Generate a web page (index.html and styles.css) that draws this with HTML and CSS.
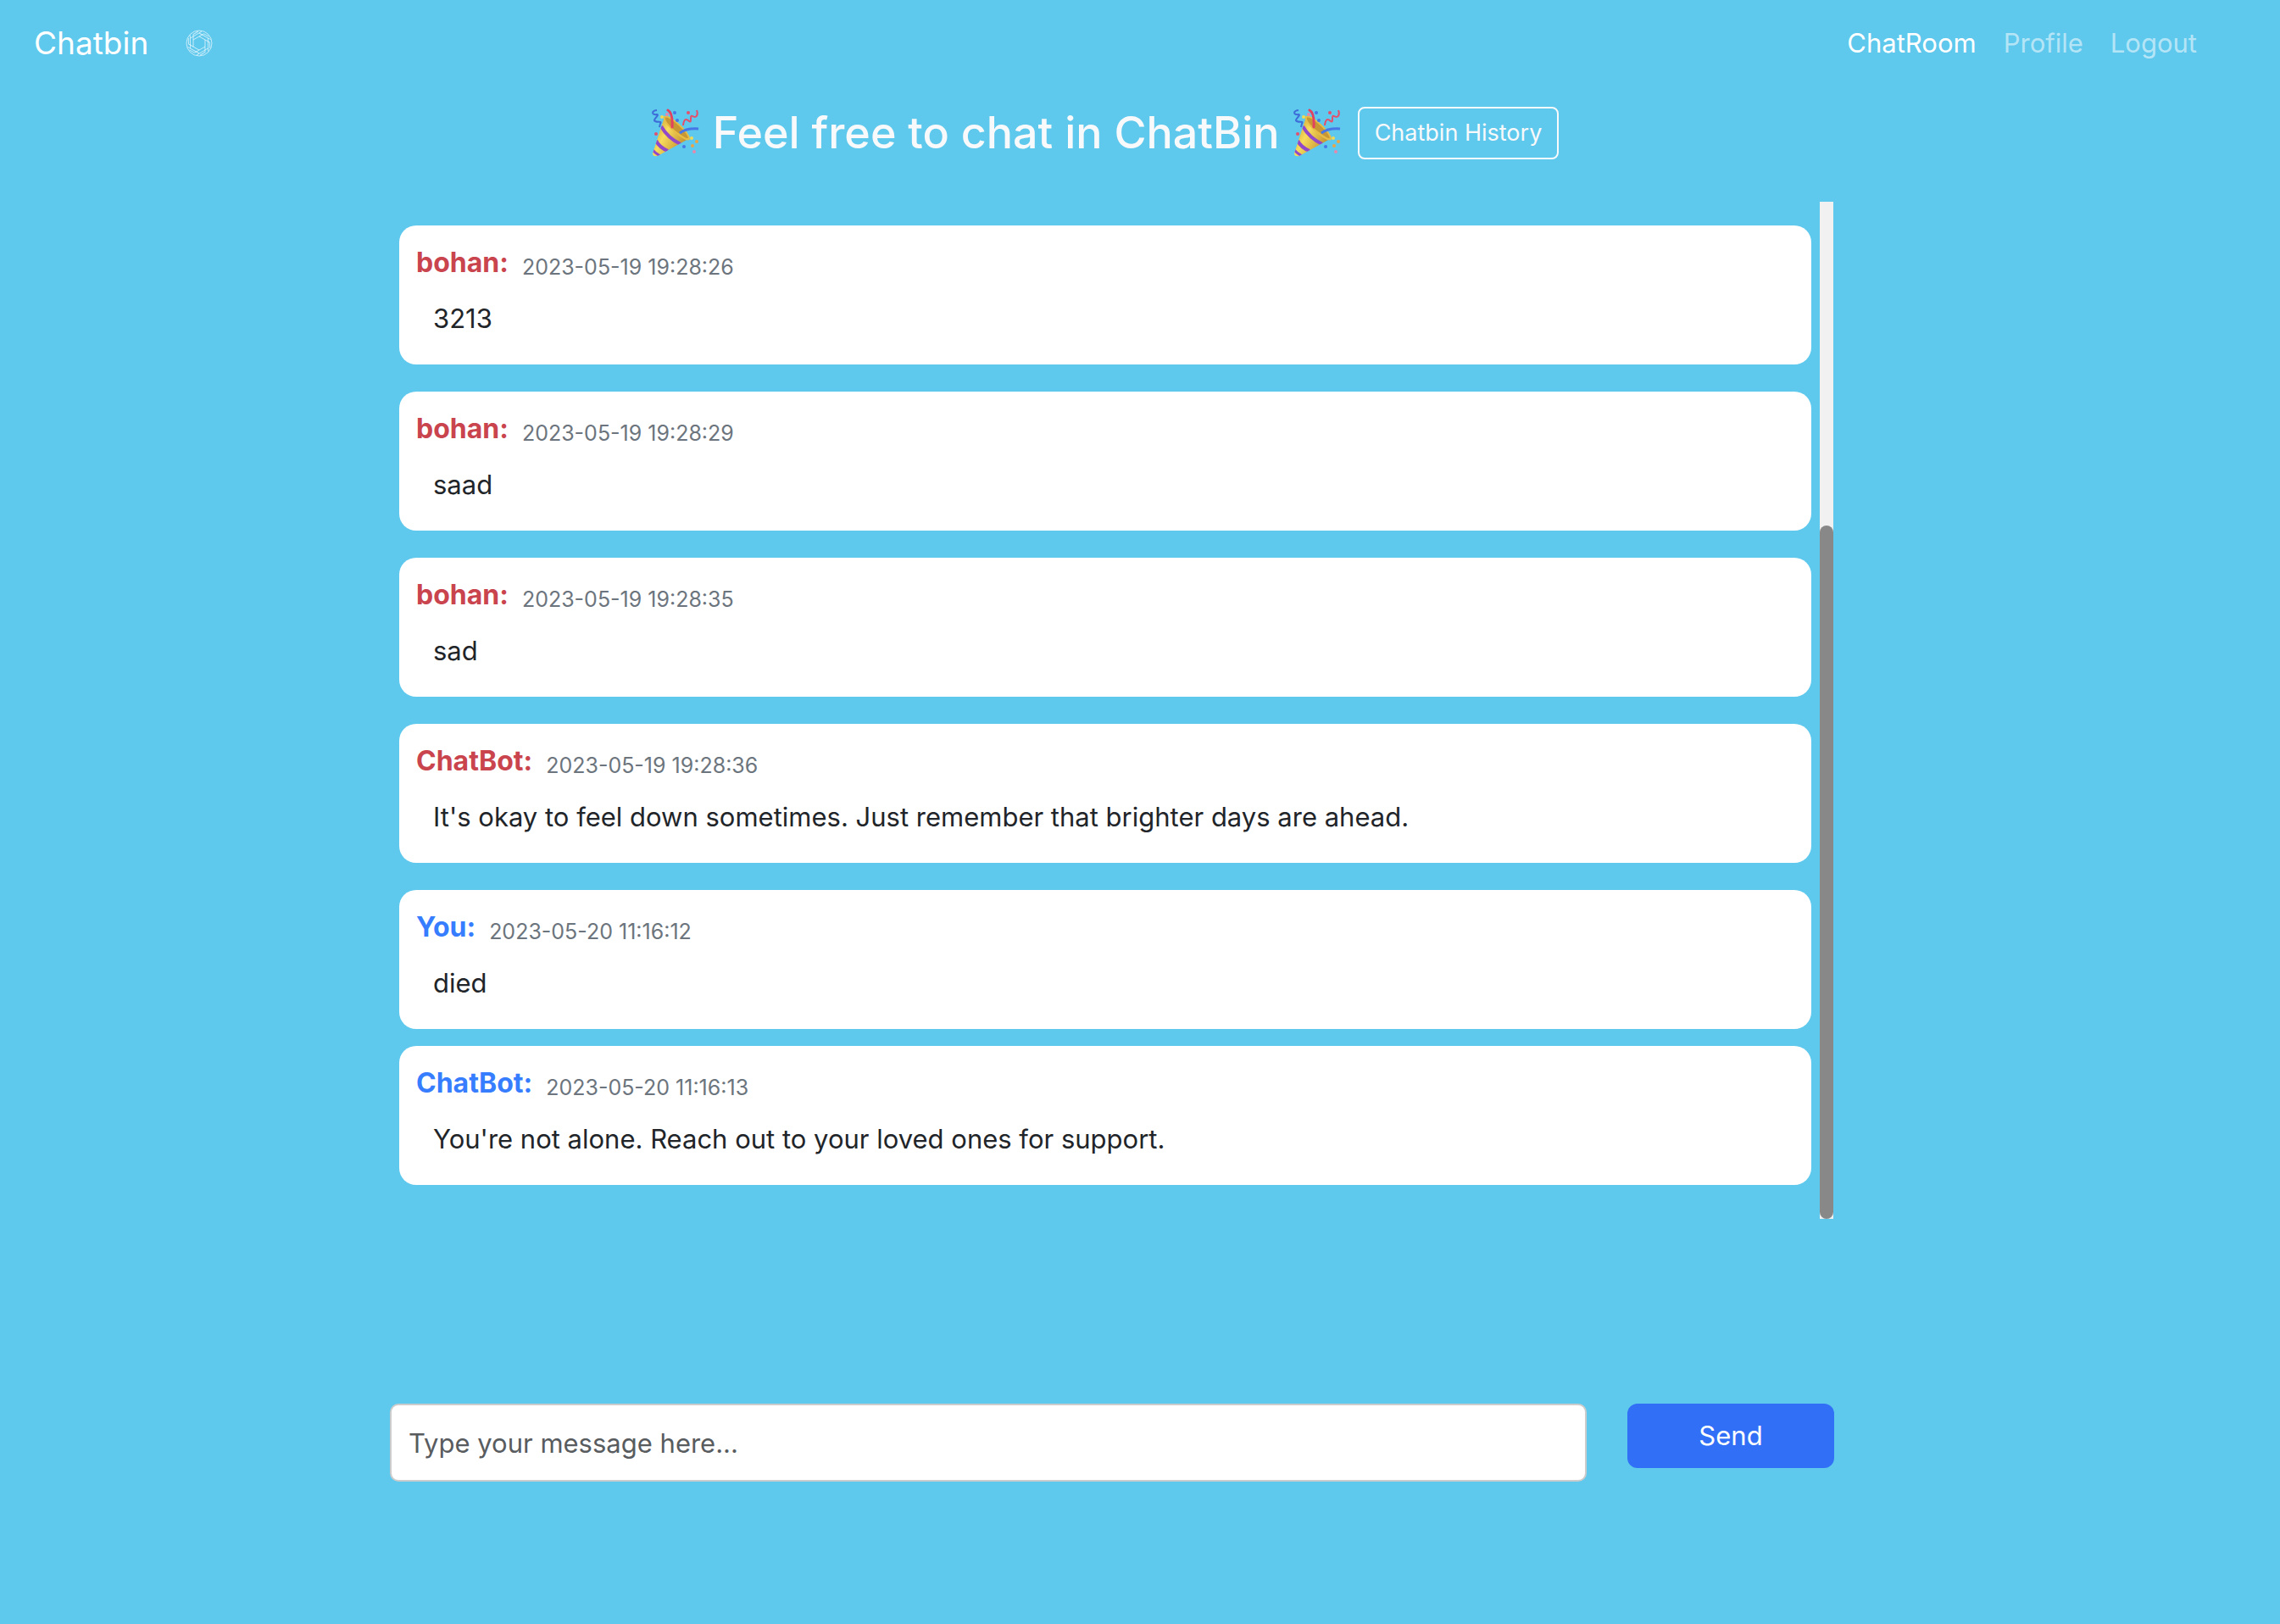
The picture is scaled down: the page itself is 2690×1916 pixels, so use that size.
FILE: index.html
```html
<!DOCTYPE html>
<html lang="en">
<head>
<meta charset="utf-8">
<meta name="viewport" content="width=device-width, initial-scale=1">
<title>Chatbin</title>
<link rel="stylesheet" href="styles.css">
</head>
<body>
<svg class="defs" aria-hidden="true">
  <defs>
    <g id="blade">
      <path d="M-7 -4 L5.5 -11.2 L11.5 -8 M-10.4 -6 L3 -14"/>
    </g>
    <linearGradient id="gold" x1="0" y1="0" x2="1" y2="0.6">
      <stop offset="0" stop-color="#b8892a"/>
      <stop offset="0.45" stop-color="#f7dc5c"/>
      <stop offset="1" stop-color="#c08a2c"/>
    </linearGradient>
    <clipPath id="cone-clip"><path d="M15 10 L1 53 Q1 57 7 56 L43 36 Z"/></clipPath>
    <symbol id="popper" viewBox="0 0 56 58">
      <path d="M15 10 L1 53 Q1 57 7 56 L43 36 Z" fill="url(#gold)"/>
      <g clip-path="url(#cone-clip)" fill="none" stroke="#9148c9" stroke-width="4">
        <path d="M11 21 Q19 35 34 42"/>
        <path d="M5 38 Q9 46 19 50"/>
        <path d="M1 49 Q4 53 10 56" stroke-width="3"/>
      </g>
      <path d="M15 10 C21 7 44 28 44 36 C40 39 13 18 15 10Z" fill="#c89735" stroke="#e8bd45" stroke-width="2"/>
      <path d="M19 2 Q25 5 24 22" fill="none" stroke="#e2415f" stroke-width="3" stroke-linecap="round"/>
      <path d="M33 29 Q41 23 55 24" fill="none" stroke="#4577e6" stroke-width="3"/>
      <path d="M6 2 C-1 3 0 8 6 7 C10 7 0 14 4 15 C8 17 12 14 10 18 L9 22" fill="none" stroke="#3d6cd8" stroke-width="2"/>
      <path d="M37 20 C38 10 42 13 44 15 C48 18 44 7 48 9 C53 12 55 7 53 2" fill="none" stroke="#e4506c" stroke-width="2"/>
      <g fill="#4577e6"><circle cx="27" cy="5" r="2"/><circle cx="30" cy="14" r="2"/><circle cx="38" cy="45" r="2"/></g>
      <g fill="#e4506c"><circle cx="43" cy="5" r="2"/><circle cx="5" cy="30" r="2"/></g>
      <g fill="#e58aae"><circle cx="18" cy="7" r="2"/><circle cx="50" cy="51" r="2"/></g>
      <g fill="#f2da55"><circle cx="12" cy="10" r="2"/><circle cx="47" cy="35" r="2"/></g>
      <g fill="#eda544"><circle cx="53" cy="39" r="2"/><circle cx="48" cy="44" r="2"/></g>
    </symbol>
  </defs>
</svg>

<header class="navbar">
  <a class="brand" href="#">Chatbin</a>
  <svg class="logo" viewBox="-16 -16 32 32" aria-hidden="true">
    <circle r="15"/>
    <use href="#blade"/>
    <use href="#blade" transform="rotate(60)"/>
    <use href="#blade" transform="rotate(120)"/>
    <use href="#blade" transform="rotate(180)"/>
    <use href="#blade" transform="rotate(240)"/>
    <use href="#blade" transform="rotate(300)"/>
  </svg>
  <nav class="links">
    <a class="link active" href="#">ChatRoom</a>
    <a class="link" href="#">Profile</a>
    <a class="link" href="#">Logout</a>
  </nav>
</header>

<main class="room">
  <div class="title-row">
    <h1 class="title">
      <svg class="popper" aria-hidden="true"><use href="#popper"/></svg>
      <span>Feel free to chat in ChatBin</span>
      <svg class="popper" aria-hidden="true"><use href="#popper"/></svg>
    </h1>
    <button class="history" type="button">Chatbin History</button>
  </div>

  <section class="chat">
    <div class="messages">
      <article class="message">
        <header class="meta"><strong class="name">bohan:</strong><time class="time">2023-05-19 19:28:26</time></header>
        <p class="text">3213</p>
      </article>
      <article class="message">
        <header class="meta"><strong class="name">bohan:</strong><time class="time">2023-05-19 19:28:29</time></header>
        <p class="text">saad</p>
      </article>
      <article class="message">
        <header class="meta"><strong class="name">bohan:</strong><time class="time">2023-05-19 19:28:35</time></header>
        <p class="text">sad</p>
      </article>
      <article class="message">
        <header class="meta"><strong class="name">ChatBot:</strong><time class="time">2023-05-19 19:28:36</time></header>
        <p class="text">It's okay to feel down sometimes. Just remember that brighter days are ahead.</p>
      </article>
      <div class="exchange">
        <article class="message own">
          <header class="meta"><strong class="name">You:</strong><time class="time">2023-05-20 11:16:12</time></header>
          <p class="text">died</p>
        </article>
        <article class="message own">
          <header class="meta"><strong class="name">ChatBot:</strong><time class="time">2023-05-20 11:16:13</time></header>
          <p class="text">You're not alone. Reach out to your loved ones for support.</p>
        </article>
      </div>
    </div>
    <div class="track"><div class="thumb"></div></div>
  </section>

  <form class="composer">
    <input class="field" type="text" placeholder="Type your message here..." aria-label="Message">
    <button class="send" type="button">Send</button>
  </form>
</main>
</body>
</html>
```
FILE: styles.css
```css
* { box-sizing: border-box; }

body {
  margin: 0;
  min-height: 100vh;
  background: #5ec8ed;
  color: #212529;
  font-family: Inter, "Liberation Sans", sans-serif;
  font-size: 31px;
  line-height: 48px;
}

.defs { position: absolute; width: 0; height: 0; }

.navbar {
  display: flex;
  align-items: center;
  padding: 20px 98px 20px 40px;
  height: 102px;
}
.brand {
  color: #fff;
  font-size: 37px;
  font-weight: 400;
  line-height: 60px;
  text-decoration: none;
}
.logo {
  width: 32px;
  height: 32px;
  margin-left: 44px;
  fill: none;
  stroke: #fff;
  stroke-opacity: 0.65;
}
.links { display: flex; gap: 32px; margin-left: auto; }
.link { color: rgba(255, 255, 255, 0.55); text-decoration: none; }
.link.active { color: #fff; }

.room { padding: 0 526px 0 460px; }

.title-row {
  display: flex;
  align-items: center;
  justify-content: center;
  gap: 20px;
  height: 110px;
  padding-right: 16px;
}
.title {
  display: flex;
  align-items: center;
  gap: 16px;
  margin: 0;
  color: #f8f9fa;
  font-size: 52px;
  font-weight: 500;
  line-height: 68px;
  white-space: nowrap;
}
.popper { width: 56px; height: 58px; }
.history {
  padding: 8px 18px;
  border: 2px solid #f8f9fa;
  border-radius: 8px;
  background: transparent;
  color: #f8f9fa;
  font: inherit;
  font-size: 27px;
  line-height: 42px;
  white-space: nowrap;
}

.chat { display: flex; gap: 10px; margin: 26px 1px 0 0; height: 1200px; }
.messages {
  flex: 1;
  display: flex;
  flex-direction: column;
  gap: 32px;
  padding: 28px 0 0 11px;
}
.exchange { display: flex; flex-direction: column; gap: 20px; }
.message {
  height: 164px;
  padding: 20px;
  border-radius: 20px;
  background: #fff;
}
.meta { display: flex; align-items: flex-end; gap: 16px; }
.name { color: #c9444d; font-size: 32px; font-weight: 700; }
.own .name { color: #377dff; }
.time { color: #6c757d; font-size: 25px; line-height: 38px; }
.text { margin: 18px 0 0; padding-left: 20px; }

.track {
  display: flex;
  align-items: flex-end;
  width: 16px;
  background: #f1f1f1;
}
.thumb { width: 100%; height: 818px; border-radius: 8px; background: #888; }

.composer {
  display: flex;
  align-items: flex-start;
  gap: 48px;
  margin-top: 218px;
}
.field {
  flex: 1;
  height: 92px;
  padding: 0 20px;
  border: 2px solid #ccc;
  border-radius: 10px;
  background: #fff;
  color: #212529;
  font: inherit;
}
.field::placeholder { color: #595c5f; opacity: 1; }
.send {
  width: 244px;
  padding: 14px 24px;
  border: 0;
  border-radius: 12px;
  background: #316ff6;
  color: #fff;
  font: inherit;
}
```
